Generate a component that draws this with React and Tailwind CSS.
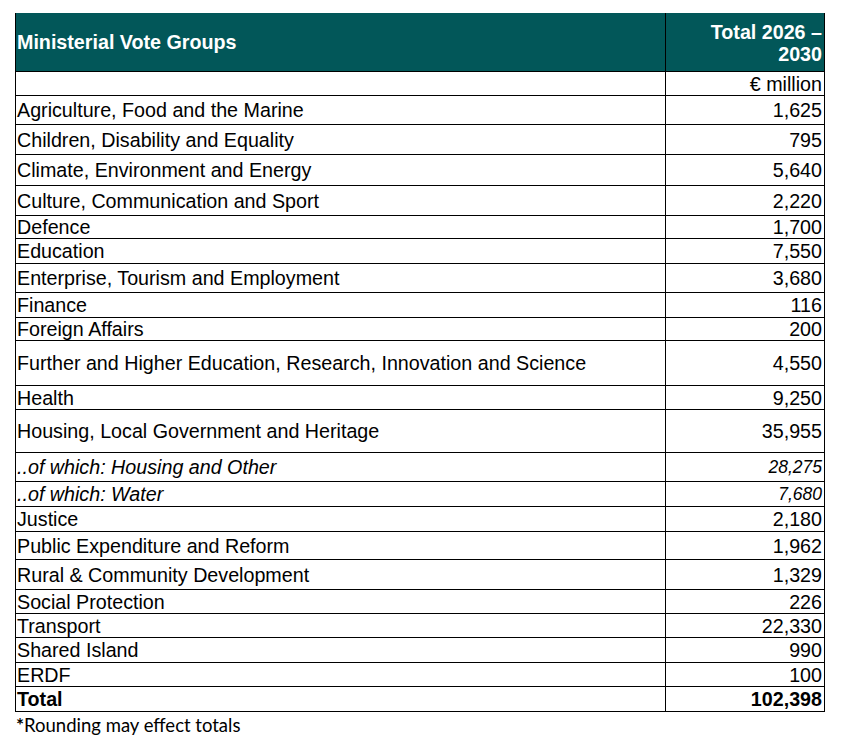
import React from 'react';

const rows = [
    { label: 'Agriculture, Food and the Marine', value: '1,625', h: 'h-[29px]' },
    { label: 'Children, Disability and Equality', value: '795', h: 'h-[30px]' },
    { label: 'Climate, Environment and Energy', value: '5,640', h: 'h-[31px]' },
    { label: 'Culture, Communication and Sport', value: '2,220', h: 'h-[30px]' },
    { label: 'Defence', value: '1,700', h: 'h-[23px]' },
    { label: 'Education', value: '7,550', h: 'h-[25px]' },
    { label: 'Enterprise, Tourism and Employment', value: '3,680', h: 'h-[29px]' },
    { label: 'Finance', value: '116', h: 'h-[25px]' },
    { label: 'Foreign Affairs', value: '200', h: 'h-[23px]' },
    { label: 'Further and Higher Education, Research, Innovation and Science', value: '4,550', h: 'h-[45px]' },
    { label: 'Health', value: '9,250', h: 'h-[24px]' },
    { label: 'Housing, Local Government and Heritage', value: '35,955', h: 'h-[43px]' },
    { label: '..of which: Housing and Other', value: '28,275', h: 'h-[29px]', sub: true },
    { label: '..of which: Water', value: '7,680', h: 'h-[25px]', sub: true },
    { label: 'Justice', value: '2,180', h: 'h-[25px]' },
    { label: 'Public Expenditure and Reform', value: '1,962', h: 'h-[28px]' },
    { label: 'Rural & Community Development', value: '1,329', h: 'h-[30px]' },
    { label: 'Social Protection', value: '226', h: 'h-[24px]' },
    { label: 'Transport', value: '22,330', h: 'h-[24px]' },
    { label: 'Shared Island', value: '990', h: 'h-[25px]' },
    { label: 'ERDF', value: '100', h: 'h-[24px]' },
    { label: 'Total', value: '102,398', h: 'h-[25px]', bold: true },
];

const Row = ({ label, value, h, sub, bold }) => (
    <div className={`flex border-b border-black ${h} ${bold ? 'font-bold' : ''}`}>
        <div className={`w-[650px] flex items-center border-r border-black pl-[1px] ${sub ? 'italic' : ''}`}>
            {label}
        </div>
        <div className={`flex-1 flex items-center justify-end pr-[2px] ${sub ? 'italic text-[17.5px]' : ''}`}>
            {value}
        </div>
    </div>
);

const App = () => {
    return (
        <div className="w-[844px] h-[740px] bg-white pt-[13px] pl-[15px] text-black text-[19.7px] leading-[22px] font-['Liberation_Sans',Arial,sans-serif]">
            <div className="w-[810px] border-l border-r border-black">
                {/* Header */}
                <div className="flex h-[59px] bg-[#025759] text-white font-bold border-b border-black">
                    <div className="w-[650px] flex items-center border-r border-black pl-[1px]">
                        Ministerial Vote Groups
                    </div>
                    <div className="flex-1 flex items-center justify-end text-right pr-[2px] pt-[2px]">
                        <span>Total 2026 –<br />2030</span>
                    </div>
                </div>

                <div className="flex h-[24px] border-b border-black">
                    <div className="w-[650px] border-r border-black"></div>
                    <div className="flex-1 flex items-end justify-end pr-[2px]">€ million</div>
                </div>

                {rows.map(r => (
                    <Row key={r.label} {...r} />
                ))}
            </div>

            <p className="mt-[2px] pl-[1px] text-[18.5px] leading-[22px] font-['Lato','Open_Sans',sans-serif]">
                <span className="font-bold text-[19px]">*</span>Rounding may effect totals
            </p>
        </div>
    );
};

export default App;
